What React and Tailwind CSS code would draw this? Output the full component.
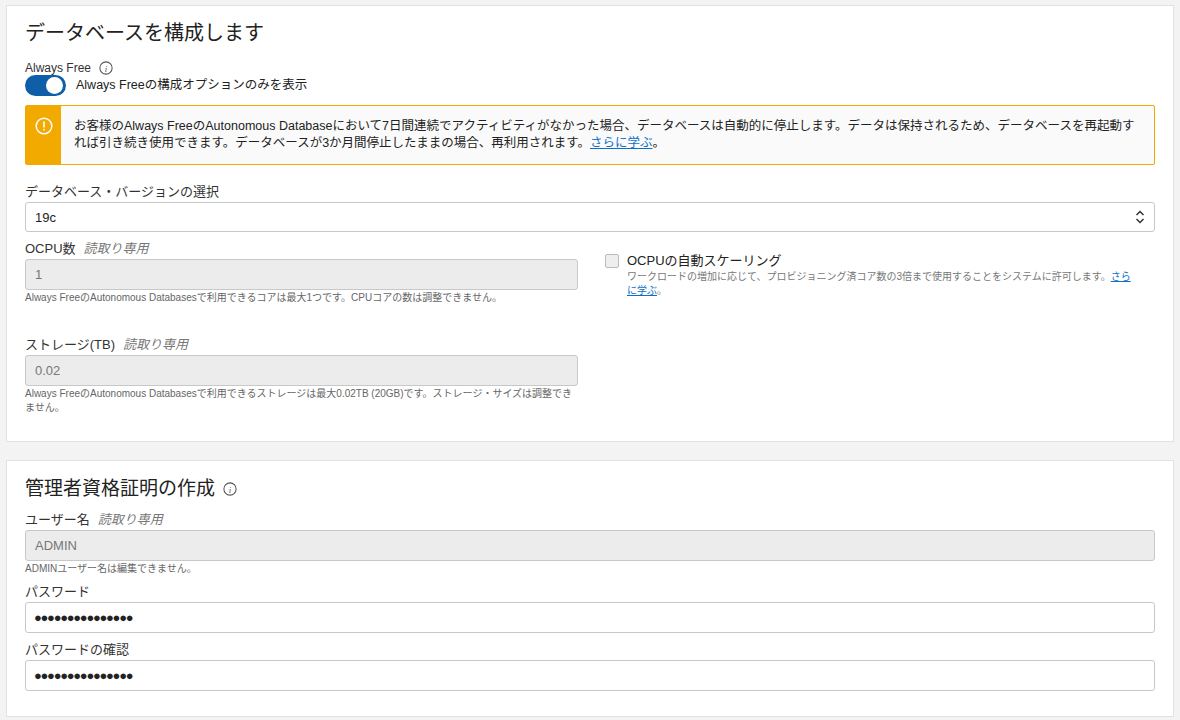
const font = { fontFamily: '"Liberation Sans", "Noto Sans CJK JP", sans-serif' };

function Info() {
  return (
    <svg width="14" height="14" viewBox="0 0 16 16" className="inline-block">
      <circle cx="8" cy="8" r="7" fill="none" stroke="#555" strokeWidth="1.2" />
      <text x="8" y="12" textAnchor="middle" fontSize="10" fontStyle="italic" fill="#555" fontFamily="Liberation Serif">i</text>
    </svg>
  );
}

function Label({ children, ro }) {
  return (
    <div className="text-[13px] text-[#333] leading-[15px] h-[15px] mb-[3px]">
      {children}
      {ro && <span className="italic text-[#777] ml-2">読取り専用</span>}
    </div>
  );
}

function ROInput({ value }) {
  return (
    <div className="h-[31px] rounded-[3px] border border-[#c8c8c8] bg-[#ececec] px-[9px] flex items-center text-[13px] leading-[15px] text-[#777]">{value}</div>
  );
}

function Help({ children }) {
  return <div className="text-[10px] text-[#666] leading-[14px] mt-[1px]">{children}</div>;
}

function Dots() {
  return (
    <div className="h-[31px] rounded-[3px] border border-[#c8c8c8] bg-white px-[8px] flex items-center text-[13px] leading-[15px] tracking-[-1.3px] text-[#222]">
      ●●●●●●●●●●●●●●●
    </div>
  );
}

export default function App() {
  return (
    <div className="min-h-screen bg-[#f3f3f3] px-[6px] pt-[5px] pb-[6px] flex flex-col gap-[18px]" style={font}>
      <div className="bg-white border border-[#e2e2e2] px-[18px] pt-[16px] pb-[26px]">
        <h2 className="text-[20px] text-[#222] leading-[22px]">データベースを構成します</h2>
        <div className="mt-[17px] text-[12px] leading-[14px] text-[#333] flex items-center gap-[8px]">Always Free <Info /></div>
        <div className="mt-[0px] flex items-center gap-[10px]">
          <div className="w-[41px] h-[21px] rounded-full bg-[#0f5ea8] relative">
            <div className="absolute right-[3px] top-[2px] w-[17px] h-[17px] rounded-full bg-white" />
          </div>
          <span className="text-[12.5px] leading-[15px] text-[#222]">Always Freeの構成オプションのみを表示</span>
        </div>
        <div className="mt-[9px] flex border border-[#f2a900] rounded-[2px] bg-[#fafafa]">
          <div className="w-[35px] bg-[#f2a900] flex justify-center pt-[11px] shrink-0">
            <svg width="18" height="18" viewBox="0 0 18 18">
              <circle cx="9" cy="9" r="7.8" fill="none" stroke="white" strokeWidth="1.5" />
              <rect x="8.2" y="4.5" width="1.6" height="6" fill="white" />
              <rect x="8.2" y="11.8" width="1.6" height="1.6" fill="white" />
            </svg>
          </div>
          <div className="pl-[13px] pr-[8px] py-[12px] text-[12.5px] leading-[17px] text-[#222]">
            お客様のAlways FreeのAutonomous Databaseにおいて7日間連続でアクティビティがなかった場合、データベースは自動的に停止します。データは保持されるため、データベースを再起動すれば引き続き使用できます。データベースが3か月間停止したままの場合、再利用されます。<a className="text-[#0d6fc6] underline">さらに学ぶ</a>。
          </div>
        </div>
        <div className="mt-[19px]"><Label>データベース・バージョンの選択</Label></div>
        <div className="h-[30px] rounded-[3px] border border-[#c8c8c8] bg-white px-[9px] flex items-center justify-between text-[13px] leading-[15px] text-[#222]">
          19c
          <svg width="10" height="14" viewBox="0 0 10 14"><path d="M1.5 5 5 1.5 8.5 5M1.5 9 5 12.5 8.5 9" fill="none" stroke="#333" strokeWidth="1.5" /></svg>
        </div>
        <div className="mt-[9px] grid grid-cols-[553px_1fr] gap-[27px]">
          <div>
            <Label ro>OCPU数</Label>
            <ROInput value="1" />
            <Help>Always FreeのAutonomous Databasesで利用できるコアは最大1つです。CPUコアの数は調整できません。</Help>
            <div className="mt-[32px]"><Label ro>ストレージ(TB)</Label></div>
            <ROInput value="0.02" />
            <Help>Always FreeのAutonomous Databasesで利用できるストレージは最大0.02TB (20GB)です。ストレージ・サイズは調整できません。</Help>
          </div>
          <div className="pt-[12px] flex gap-[8px] pr-[24px]">
            <div className="w-[14px] h-[14px] mt-[1px] rounded-[2px] border border-[#bbb] bg-[#eee] shrink-0" />
            <div>
              <div className="text-[13px] text-[#222] leading-[16px]">OCPUの自動スケーリング</div>
              <div className="text-[10px] text-[#777] leading-[14px] mt-[1px]">ワークロードの増加に応じて、プロビジョニング済コア数の3倍まで使用することをシステムに許可します。<a className="text-[#0d6fc6] underline">さらに学ぶ</a>。</div>
            </div>
          </div>
        </div>
      </div>
      <div className="bg-white border border-[#e2e2e2] px-[18px] pt-[17px] pb-[25px]">
        <h2 className="text-[19px] text-[#222] leading-[22px] flex items-center gap-[8px]">管理者資格証明の作成 <Info /></h2>
        <div className="mt-[12px]"><Label ro>ユーザー名</Label></div>
        <ROInput value="ADMIN" />
        <Help>ADMINユーザー名は編集できません。</Help>
        <div className="mt-[8px]"><Label>パスワード</Label></div>
        <Dots />
        <div className="mt-[9px]"><Label>パスワードの確認</Label></div>
        <Dots />
      </div>
    </div>
  );
}
